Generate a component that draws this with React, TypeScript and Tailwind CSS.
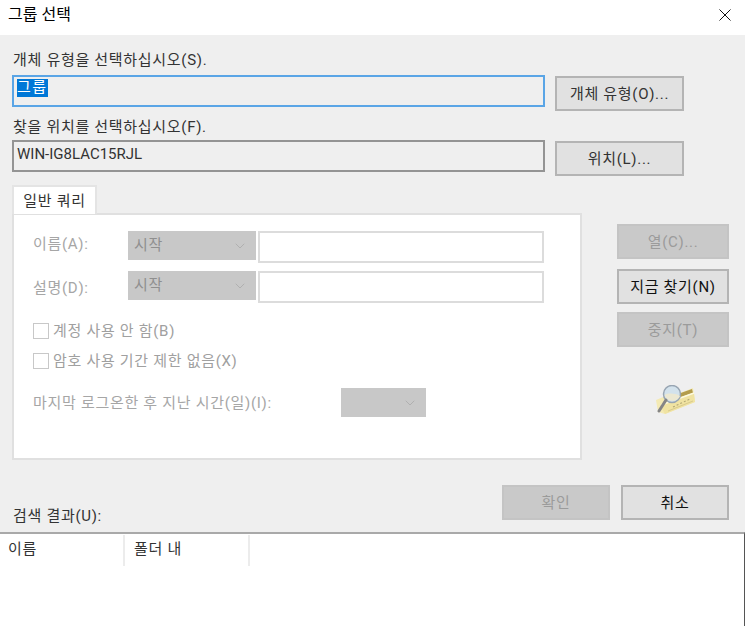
import { ChevronDown } from "lucide-react";

const FONT = "font-['Roboto','Noto_Sans_CJK_KR',sans-serif]";
const TEXT = "text-[15px] leading-[18px] tracking-[0.7px]";

function DialogButton({
  label,
  width = "w-[112px]",
  disabled = false,
  dark = false,
}: {
  label: string;
  width?: string;
  disabled?: boolean;
  dark?: boolean;
}) {
  return (
    <div
      className={`${width} h-[35px] flex items-center justify-center ${TEXT} border-2 ${
        disabled
          ? "bg-[#c9c9c9] border-[#c4c4c4] text-[#9b9b9b]"
          : "bg-[#e1e1e1] border-[#b4b4b4]"
      } ${!disabled && dark ? "text-[#111111]" : ""} ${!disabled && !dark ? "text-[#333333]" : ""}`}
    >
      {label}
    </div>
  );
}

function DisabledSelect({ label, width }: { label?: string; width: string }) {
  return (
    <div className={`${width} h-[29px] bg-[#c8c8c8] flex items-center justify-between pl-[6px] pr-[8px]`}>
      <span className={`${TEXT} text-[#8f8f8f] -mt-[2px]`}>{label}</span>
      <ChevronDown className="w-[16px] h-[16px] text-[#a9a9a9]" strokeWidth={1.2} />
    </div>
  );
}

function FilterRow({ label, labelOffset }: { label: string; labelOffset: string }) {
  return (
    <div className="flex items-start h-[32px]">
      <div className={`w-[95px] ${TEXT} text-[#a6a6a6] ${labelOffset}`}>{label}</div>
      <DisabledSelect label="시작" width="w-[128px]" />
      <div className="w-[286px] h-[32px] ml-[2px] bg-white border-2 border-[#dcdcdc]" />
    </div>
  );
}

function CheckRow({ label }: { label: string }) {
  return (
    <div className="flex items-center h-[16px] gap-[4px]">
      <div className="w-[16px] h-[16px] bg-white border border-[#c8c8c8]" />
      <span className={`${TEXT} text-[#a0a0a0]`}>{label}</span>
    </div>
  );
}

function SearchIcon() {
  return (
    <svg width="40" height="30" viewBox="0 0 40 30" className="block">
      <path d="M0 15 L12 10 L24 8 L37 3 L39 17 L9 29 L2 27 Z" fill="#f4eab4" />
      <path d="M22 9 L36 4 L37 8 L25 12 Z" fill="#b39c4c" />
      <path d="M4 20 L38 8 L39 17 L9 29 Z" fill="#f0e3a2" />
      <path d="M5 20 L38 8" stroke="#fdf9de" strokeWidth="1.4" fill="none" />
      <path d="M17 22 L35 13.5" stroke="#b0a674" strokeWidth="1.1" strokeDasharray="2 2" fill="none" />
      <path d="M12 26 L37 16" stroke="#d8ca8c" strokeWidth="1" fill="none" />
      <circle cx="16" cy="9" r="8.5" fill="#d3e2ec" stroke="#98a5b2" strokeWidth="1.5" />
      <path d="M8.5 10 C12 8 19 8 24 11 C22 17 11 18 8.5 10 Z" fill="#ece8d2" />
      <path d="M10 15 L3 26" stroke="#858585" strokeWidth="3" strokeLinecap="round" />
    </svg>
  );
}

export default function App() {
  return (
    <div className={`w-[745px] h-[626px] overflow-hidden bg-[#efefef] text-[#333333] ${FONT}`}>
      {/* 제목 표시줄 */}
      <div className="h-[35px] bg-white flex items-center justify-between pl-[8px] pr-[14px]">
        <span className="text-[16px] leading-[20px] text-black -mt-[5px]">그룹 선택</span>
        <svg width="12" height="12" viewBox="0 0 12 12" className="-mt-[5px]">
          <path d="M0.5 0.5 L11.5 11.5 M11.5 0.5 L0.5 11.5" stroke="#111111" strokeWidth="1" fill="none" />
        </svg>
      </div>

      <div className="px-[12px] pt-[16px]">
        <div className={`${TEXT} pl-px`}>개체 유형을 선택하십시오(S).</div>
        <div className="flex items-start gap-[10px] mt-[6px]">
          <div className="w-[533px] h-[32px] border-2 border-[#5aa5e6] pl-[3px] pt-[2px]">
            <span className="block w-[31px] h-[18px] bg-[#0078d7] text-white text-[15px] leading-[16px] tracking-[1.4px]">그룹</span>
          </div>
          <div className="mt-px">
            <DialogButton label="개체 유형(O)..." width="w-[129px]" />
          </div>
        </div>

        <div className={`${TEXT} pl-px mt-[7px]`}>찾을 위치를 선택하십시오(F).</div>
        <div className="flex items-start gap-[10px] mt-[4px]">
          <div className="w-[533px] h-[32px] border-2 border-[#949494] pl-[3px] pt-[3px] text-[15px] leading-[18px]">
            WIN-IG8LAC15RJL
          </div>
          <div className="mt-px">
            <DialogButton label="위치(L)..." width="w-[129px]" />
          </div>
        </div>

        <div className="flex items-start mt-[9px]">
          <div className="w-[570px]">
            <div className={`w-[85px] h-[29px] bg-white border-2 border-b-0 border-[#e4e4e4] flex items-center justify-center ${TEXT} relative z-10 -mb-[1px]`}>
              일반 쿼리
            </div>
            {/* 일반 쿼리 패널 */}
            <div className="h-[247px] bg-white border-2 border-[#e0e0e0] pl-[19px] pt-[16px]">
              <FilterRow label="이름(A):" labelOffset="mt-[4px]" />
              <div className="mt-[8px]">
                <FilterRow label="설명(D):" labelOffset="mt-[8px]" />
              </div>
              <div className="mt-[20px]">
                <CheckRow label="계정 사용 안 함(B)" />
              </div>
              <div className="mt-[14px]">
                <CheckRow label="암호 사용 기간 제한 없음(X)" />
              </div>
              <div className="flex items-center mt-[19px]">
                <div className={`w-[308px] ${TEXT} text-[#a6a6a6]`}>마지막 로그온한 후 지난 시간(일)(I):</div>
                <DisabledSelect width="w-[85px]" />
              </div>
            </div>
          </div>

          <div className="ml-[35px] mt-[39px] flex flex-col">
            <DialogButton label="열(C)..." disabled />
            <div className="mt-[10px]">
              <DialogButton label="지금 찾기(N)" dark />
            </div>
            <div className="mt-[8px]">
              <DialogButton label="중지(T)" disabled />
            </div>
            <div className="mt-[38px] ml-[39px]">
              <SearchIcon />
            </div>
          </div>
        </div>

        <div className="flex items-start h-[40px] mt-[25px]">
          <div className={`mt-[22px] ${TEXT} pl-px`}>검색 결과(U):</div>
          <div className="ml-auto mr-[4px] flex gap-[11px]">
            <DialogButton label="확인" width="w-[108px]" disabled />
            <DialogButton label="취소" width="w-[108px]" dark />
          </div>
        </div>
      </div>

      {/* 검색 결과 목록 */}
      <div className="mt-[7px] h-[94px] bg-white border-t-2 border-t-[#a9a9a9] border-r border-r-[#555555]">
        <div className="flex h-[31px] mt-px">
          <div className="w-[125px] pl-[8px] border-r-2 border-[#ececec] text-[15px] tracking-[0.7px] leading-[28px]">이름</div>
          <div className="w-[125px] pl-[9px] border-r-2 border-[#ececec] text-[15px] tracking-[0.7px] leading-[28px]">폴더 내</div>
        </div>
      </div>
    </div>
  );
}
